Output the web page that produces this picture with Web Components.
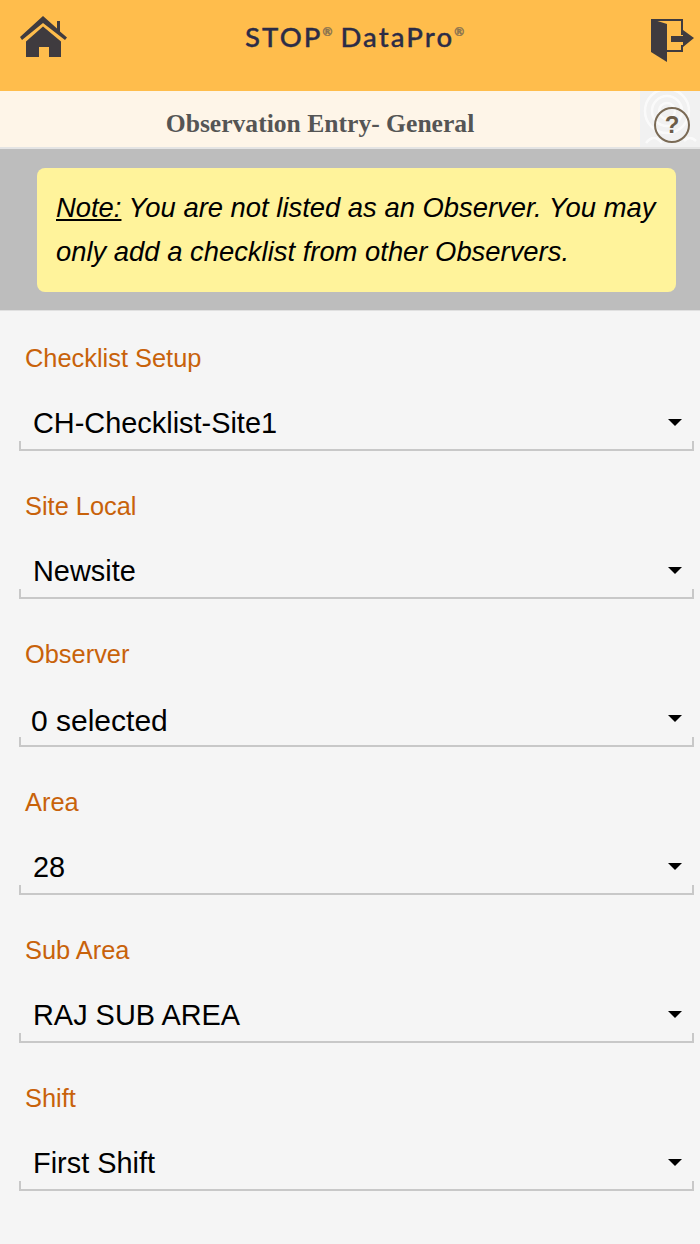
<!DOCTYPE html>
<html><head><meta charset="utf-8"><style>
html,body{margin:0;padding:0;background:#f5f5f5;font-family:"Liberation Sans",Arial,sans-serif}
body{width:700px;height:1244px;overflow:hidden}
</style></head><body>
<app-header></app-header>
<sub-header>Observation Entry- General</sub-header>
<note-panel><u>Note:</u> You are not listed as an Observer. You may only add a checklist from other Observers.</note-panel>
<form-list>
<select-field label="Checklist Setup" value="CH-Checklist-Site1"></select-field>
<select-field label="Site Local" value="Newsite"></select-field>
<select-field label="Observer" value="0 selected" shift="1"></select-field>
<select-field label="Area" value="28"></select-field>
<select-field label="Sub Area" value="RAJ SUB AREA"></select-field>
<select-field label="Shift" value="First Shift"></select-field>
</form-list>
<script>
function def(name,html,init){customElements.define(name,class extends HTMLElement{connectedCallback(){if(this.shadowRoot)return;const r=this.attachShadow({mode:'open'});r.innerHTML=html;if(init)init(this,r);}});}
def('app-header',`<style>
:host{display:flex;height:91px;background:#ffbd4c;align-items:flex-start;justify-content:space-between;box-sizing:border-box;position:relative}
svg{display:block;flex:none}
.home{margin:15px 0 0 19px}
.exit{margin:18px 6px 0 0}
.logo{position:absolute;left:245px;top:19px;display:flex;font:500 27.5px/36px Lato,sans-serif;color:#2b2c47;white-space:nowrap;letter-spacing:2.1px;-webkit-text-stroke:.35px #2b2c47}
.r{font-size:12px;font-weight:700;line-height:26px;color:#8a7350;-webkit-text-stroke:.4px #8a7350;letter-spacing:0}
.d{margin-left:8px}
</style>
<svg class="home" width="50" height="44" viewBox="0 0 50 44"><path fill="#3f3b3f" d="M1 22 24 1 38 13.500V6H41V16.500L48 22.500 46 25 24 8 3 25Z"/><path fill="#3f3b3f" d="M7 26.500 24 11.500 42 26.500V42H30V32H20V42H7Z"/></svg>
<span class="logo"><span>STOP</span><span class="r">®</span><span class="d">DataPro</span><span class="r">®</span></span>
<svg class="exit" width="46" height="46" viewBox="0 0 46 46"><path fill="#3f3b3f" d="M3 1 19 6V44L3 34Z"/><path fill="none" stroke="#3f3b3f" stroke-width="2" d="M3 2H34V17M19 33H34V27"/><path fill="#3f3b3f" d="M23 18H35V12L46 20 35 29V24H23Z"/></svg>`);
def('sub-header',`<style>
:host{display:flex;height:58px;box-sizing:border-box;background:#fef5e8;border-bottom:2px solid #e4e4e4;position:relative}
.t{width:640px;text-align:center;font:700 25.6px/65px "Liberation Serif",serif;color:#555}
.c{width:60px;height:56px;background:#f1f1f1;position:relative;overflow:hidden}
svg{position:absolute;inset:0;opacity:.7}
.q{position:absolute;left:14px;top:16px;width:36px;height:36px;box-sizing:border-box;border:2px solid #7a6a55;border-radius:50%;text-align:center;font:700 24px/32px "Liberation Sans",sans-serif;color:#6b5c48}
</style><div class="t"><slot></slot></div><div class="c"><svg width="60" height="56" fill="none" stroke="#fff" stroke-width="2.500"><circle cx="27" cy="20" r="8"/><circle cx="27" cy="20" r="15"/><circle cx="27" cy="20" r="22"/><path d="M6 52q8-10 16 0M44 50q6-6 12 0"/></svg><div class="q">?</div></div>`);
def('note-panel',`<style>
:host{display:block;background:#bdbdbd;padding:19px 24px 18px 37px;height:162px;box-sizing:border-box;border-bottom:1px solid #e0e0e0}
.n{height:124px;box-sizing:border-box;background:#fff39b;border-radius:8px;padding:18px 19px;font:italic 27.4px/44px "Liberation Sans",sans-serif;color:#000}
</style><div class="n"><slot></slot></div>`);
def('form-list',`<style>:host{display:block;padding-top:29px;background:#f5f5f5}</style><slot></slot>`);
def('select-field',`<style>
:host{display:block;height:148px;padding:0 6px 0 19px;box-sizing:border-box;font-family:"Liberation Sans",sans-serif}
.l{height:37px;padding-left:6px;font-size:25.4px;line-height:37px;color:#c8620a}
.s{margin-top:30px;height:33px;box-sizing:border-box;padding:0 0 0 14px;position:relative;display:flex;align-items:center;justify-content:space-between;font-size:28.9px;color:#000}
.b{margin-top:1px;height:10px;border:solid #c8c8c8;border-width:0 2px 2px 2px;box-sizing:border-box}
.a{width:0;height:0;border:7px solid transparent;border-top:7px solid #000;border-bottom:0;margin-right:12px;margin-top:-3px}
.v{white-space:nowrap}
:host([shift]) .v{margin-left:-2px;font-size:30px;position:relative;top:1px}
</style><div class="l"></div><div class="s"><span class="v"></span><span class="a"></span></div><div class="b"></div>`,(h,r)=>{r.querySelector('.l').textContent=h.getAttribute('label');r.querySelector('.v').textContent=h.getAttribute('value');});
</script>
</body></html>
